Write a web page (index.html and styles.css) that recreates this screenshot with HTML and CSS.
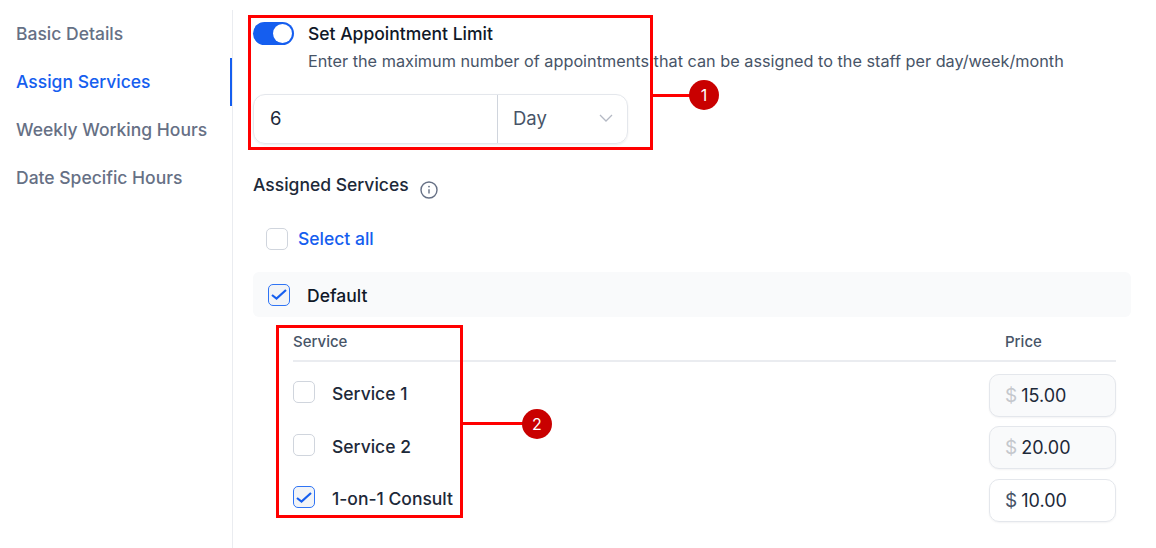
FILE: index.html
```html
<!DOCTYPE html>
<html lang="en">
<head>
<meta charset="utf-8">
<title>Assign Services</title>
<link rel="stylesheet" href="styles.css">
</head>
<body>
<div class="page">
  <nav class="side">
    <a class="nav-item">Basic Details</a>
    <a class="nav-item active">Assign Services</a>
    <a class="nav-item">Weekly Working Hours</a>
    <a class="nav-item">Date Specific Hours</a>
  </nav>
  <main class="main">
    <div class="limit-row">
      <span class="toggle"><span class="knob"></span></span>
      <div>
        <div class="limit-title">Set Appointment Limit</div>
        <div class="limit-desc">Enter the maximum number of appointments that can be assigned to the staff per day/week/month</div>
      </div>
    </div>
    <div class="limit-input">
      <div class="limit-value">6</div>
      <div class="limit-unit">Day
        <svg class="chev" width="14" height="8" viewBox="0 0 14 8"><path d="M1 1 7 7l6-6" fill="none" stroke="#b4b9c4" stroke-width="1.3"/></svg>
      </div>
    </div>
    <div class="assigned">Assigned Services
      <svg class="info" width="18" height="18" viewBox="0 0 18 18"><circle cx="9" cy="9" r="8" fill="none" stroke="#667085" stroke-width="1.4"/><path d="M9 8.2v4.3" stroke="#667085" stroke-width="1.4"/><circle cx="9" cy="5.6" r=".9" fill="#667085"/></svg>
    </div>
    <label class="select-all"><span class="cb"></span><span class="select-text">Select all</span></label>
    <div class="group-head">
      <span class="cb checked"><svg width="16" height="11" viewBox="0 0 16 11"><path d="M1 6 5.5 9.5 15 1" fill="none" stroke="#155eef" stroke-width="2.2"/></svg></span>
      <span class="group-text">Default</span>
    </div>
    <div class="table">
      <div class="table-head"><span>Service</span><span class="price-col">Price</span></div>
      <div class="row">
        <div class="svc"><span class="cb"></span><span>Service 1</span></div>
        <div class="price disabled"><span class="cur">$</span><span>15.00</span></div>
      </div>
      <div class="row">
        <div class="svc"><span class="cb"></span><span>Service 2</span></div>
        <div class="price disabled"><span class="cur">$</span><span>20.00</span></div>
      </div>
      <div class="row">
        <div class="svc"><span class="cb checked"><svg width="16" height="11" viewBox="0 0 16 11"><path d="M1 6 5.5 9.5 15 1" fill="none" stroke="#155eef" stroke-width="2.2"/></svg></span><span>1-on-1 Consult</span></div>
        <div class="price"><span class="cur">$</span><span>10.00</span></div>
      </div>
    </div>
  </main>
</div>
<div class="note note-1"></div>
<div class="line line-1"></div>
<div class="badge badge-1">1</div>
<div class="note note-2"></div>
<div class="line line-2"></div>
<div class="badge badge-2">2</div>
</body>
</html>
```
FILE: styles.css
```css
* { box-sizing: border-box; }
html, body { margin: 0; height: 100%; background: #fff; overflow: hidden; }
body { font-family: Inter, "Liberation Sans", sans-serif; color: #101828; position: relative; }
.page { display: flex; height: 548px; padding-top: 10px; }
.side { width: 233px; flex: none; border-right: 1px solid #eaecf0; position: relative; }
.nav-item { display: flex; align-items: center; height: 48px; padding: 0 0 1px 16px; font-size: 17.5px; font-weight: 500; color: #667085; }
.nav-item.active { color: #155eef; box-shadow: inset -2px 0 0 #155eef; }
.main { flex: 1; padding: 0 25px 0 20px; min-width: 0; }
.limit-row { display: flex; gap: 14px; margin-top: 12px; }
.toggle { width: 41px; height: 23px; border-radius: 12px; background: #155eef; flex: none; display: flex; justify-content: flex-end; align-items: center; padding-right: 2px; }
.knob { width: 19px; height: 19px; border-radius: 50%; background: #fff; }
.limit-title { font-size: 17.5px; font-weight: 500; line-height: 24px; color: #101828; }
.limit-desc { font-size: 16.25px; line-height: 24px; margin-top: 3px; color: #475467; white-space: nowrap; }
.limit-input { display: flex; width: 375px; height: 50px; margin-top: 21px; border: 1px solid #e4e7ec; border-radius: 12px; font-size: 18.5px; box-shadow: 0 1px 2px rgba(16,24,40,.08); }
.limit-value { width: 244px; padding: 0 0 2px 16px; display: flex; align-items: center; border-right: 1px solid #d0d5dd; color: #1d2939; }
.limit-unit { flex: 1; padding: 0 14px 2px 15px; display: flex; align-items: center; justify-content: space-between; color: #475467; }
.assigned { margin-top: 29px; font-size: 17.5px; font-weight: 500; color: #1d2939; display: flex; align-items: flex-start; gap: 11px; line-height: 24px; }
.info { margin-top: 8px; }
.select-all { display: flex; align-items: center; gap: 10px; margin: 28px 0 0 13px; font-size: 17.5px; font-weight: 500; color: #155eef; height: 24px; }
.select-text { padding-bottom: 2px; }
.cb { width: 22px; height: 22px; flex: none; border: 1px solid #d0d5dd; border-radius: 5px; background: #fff; display: flex; align-items: center; justify-content: center; }
.cb.checked { border-color: #2f74f5; background: #f2f4f7; }
.group-head { display: flex; align-items: center; gap: 17px; height: 45px; margin-top: 21px; padding-left: 15px; background: #f9fafb; border-radius: 6px; font-size: 17.5px; font-weight: 500; color: #101828; }
.group-text { padding-top: 2px; }
.table { padding: 0 15px 0 40px; }
.table-head { display: flex; justify-content: space-between; height: 45px; margin-bottom: 7px; padding-top: 15px; border-bottom: 2px solid #eaecf0; font-size: 15px; font-weight: 500; line-height: 20px; color: #475467; }
.price-col { width: 111px; }
.row { display: flex; justify-content: space-between; align-items: center; height: 52.5px; }
.svc { display: flex; align-items: center; gap: 17px; font-size: 17.5px; font-weight: 500; color: #1d2939; margin-bottom: 3px; }
.svc .cb { margin-bottom: 3px; }
.price { width: 127px; height: 43px; padding-left: 15px; display: flex; align-items: center; gap: 4px; border: 1px solid #e4e7ec; border-radius: 10px; font-size: 18px; color: #1d2939; box-shadow: 0 1px 2px rgba(16,24,40,.05); }
.price.disabled { background: #f9fafb; }
.price.disabled .cur { color: #c4c7cc; }
.cur { color: #475467; font-size: 19px; }
.note { position: absolute; border: 3px solid #f00; }
.note-1 { left: 248px; top: 15px; width: 405px; height: 135px; }
.note-2 { left: 276px; top: 325px; width: 187px; height: 193px; }
.line { position: absolute; height: 3px; background: #f00; }
.line-1 { left: 653px; top: 94px; width: 40px; }
.line-2 { left: 463px; top: 422px; width: 65px; }
.badge { position: absolute; width: 30px; height: 30px; border-radius: 50%; background: #c90000; color: #fff; font-size: 16px; display: flex; align-items: center; justify-content: center; }
.badge-1 { left: 689px; top: 80px; }
.badge-2 { left: 522px; top: 409px; }
```
